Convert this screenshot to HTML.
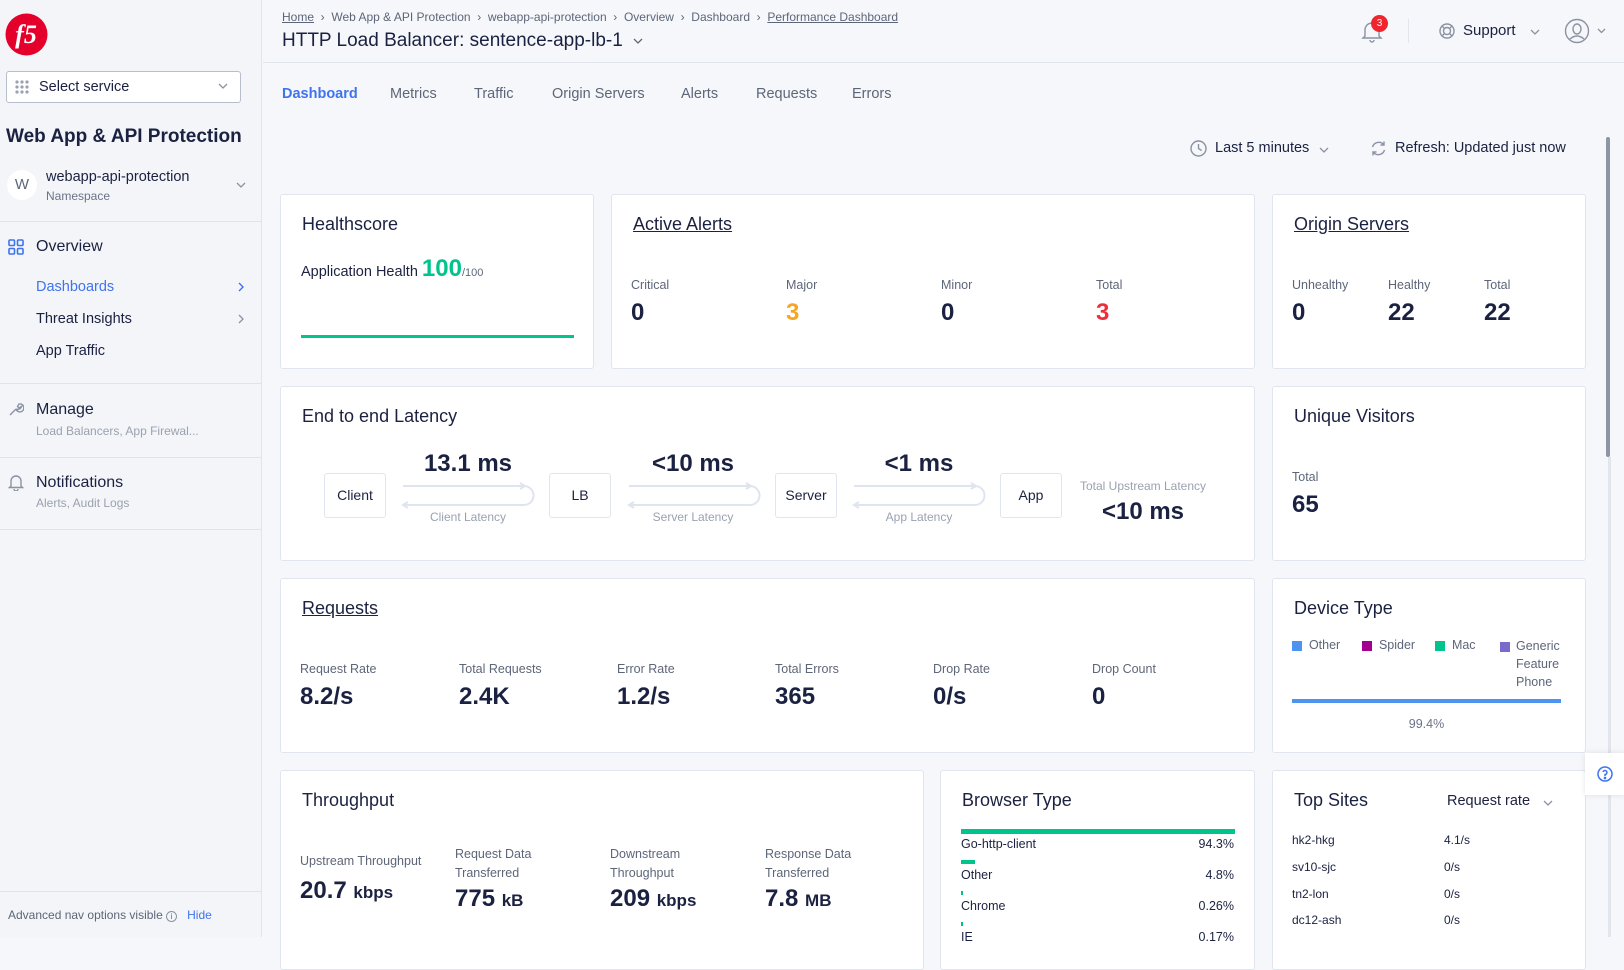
<!DOCTYPE html>
<html><head><meta charset="utf-8"><style>
*{box-sizing:border-box;margin:0;padding:0}
body{width:1624px;height:937px;overflow:hidden;background:#f5f7fa;font-family:"Liberation Sans",sans-serif;color:#1b2141;position:relative}
.a{position:absolute;white-space:nowrap}
.side{position:absolute;left:0;top:0;width:262px;height:937px;background:#f3f5f8;border-right:1px solid #e1e5ec}
.hr{position:absolute;left:0;width:262px;height:1px;background:#dfe3ea}
.card{position:absolute;background:#fff;border:1px solid #e1e5ee;border-radius:3px}
.ct{position:absolute;left:21px;top:19px;font-size:18px;color:#1b2141}
.u{text-decoration:underline}
.lb{font-size:12.5px;color:#5d6679}
.v{font-size:24px;font-weight:bold;color:#1b2141}
.tab{position:absolute;top:86px;font-size:14.5px;color:#5d6679}
.box{position:absolute;top:473px;height:45px;border:1px solid #e1e5ee;border-radius:3px;font-size:14px;text-align:center;line-height:43px;background:#fff}
.lat{position:absolute;top:450px;font-size:24px;font-weight:bold;text-align:center;width:140px}
.ll{position:absolute;top:510px;font-size:12px;color:#9aa1b0;text-align:center;width:140px}
.sq{display:inline-block;width:10px;height:10px;vertical-align:middle}
.chev{position:absolute}
</style></head><body>
<div class="side">
 <svg class="a" style="left:5px;top:13px" width="43" height="43" viewBox="0 0 43 43"><circle cx="21.5" cy="21.5" r="21" fill="#e4002b"/><text x="21" y="30" font-family="Liberation Serif" font-style="italic" font-weight="bold" font-size="26" fill="#fff" text-anchor="middle">f5</text></svg>
 <div class="a" style="left:6px;top:71px;width:235px;height:32px;border:1px solid #b8bfcc;border-radius:3px;background:#fff"></div>
 <svg class="a" style="left:15px;top:80px" width="15" height="15"><g fill="#9aa1b0"><circle cx="2" cy="2" r="1.6"/><circle cx="7" cy="2" r="1.6"/><circle cx="12" cy="2" r="1.6"/><circle cx="2" cy="7" r="1.6"/><circle cx="7" cy="7" r="1.6"/><circle cx="12" cy="7" r="1.6"/><circle cx="2" cy="12" r="1.6"/><circle cx="7" cy="12" r="1.6"/><circle cx="12" cy="12" r="1.6"/></g></svg>
 <div class="a" style="left:39px;top:79px;font-size:14.5px">Select service</div>
 <svg class="chev" style="left:218px;top:83px" width="10" height="6" fill="none" stroke="#8a92a3" stroke-width="1.3"><path d="M1 1 L5 5 L9 1"/></svg>
 <div class="a" style="left:7px;top:170px;width:30px;height:30px;border-radius:50%;background:#fff;text-align:center;line-height:30px;font-size:15px;color:#5d6679">W</div>
 <div class="a" style="left:6px;top:126px;font-size:19px;font-weight:bold">Web App &amp; API Protection</div>
 <div class="a" style="left:46px;top:169px;font-size:14.5px">webapp-api-protection</div>
 <div class="a" style="left:46px;top:189px;font-size:12px;color:#6b7386">Namespace</div>
 <svg class="chev" style="left:236px;top:182px" width="10" height="6" fill="none" stroke="#8a92a3" stroke-width="1.3"><path d="M1 1 L5 5 L9 1"/></svg>
 <div class="hr" style="top:221px"></div>
 <svg class="a" style="left:8px;top:239px" width="16" height="16" fill="none" stroke="#3f73ef" stroke-width="1.6"><rect x="1" y="1" width="5.5" height="5.5" rx="1"/><rect x="9.5" y="1" width="5.5" height="5.5" rx="1"/><rect x="1" y="9.5" width="5.5" height="5.5" rx="1"/><rect x="9.5" y="9.5" width="5.5" height="5.5" rx="1"/></svg>
 <div class="a" style="left:36px;top:238px;font-size:16px;font-weight:500">Overview</div>
 <div class="a" style="left:36px;top:279px;font-size:14.5px;color:#3f73ef">Dashboards</div>
 <svg class="chev" style="left:238px;top:282px" width="6" height="10" fill="none" stroke="#3f73ef" stroke-width="1.4"><path d="M1 1 L5 5 L1 9"/></svg>
 <div class="a" style="left:36px;top:311px;font-size:14.5px">Threat Insights</div>
 <svg class="chev" style="left:238px;top:314px" width="6" height="10" fill="none" stroke="#8a92a3" stroke-width="1.3"><path d="M1 1 L5 5 L1 9"/></svg>
 <div class="a" style="left:36px;top:343px;font-size:14.5px">App Traffic</div>
 <div class="hr" style="top:383px"></div>
 <svg class="a" style="left:8px;top:401px" width="16" height="16" fill="none" stroke="#8a92a3" stroke-width="1.4"><path d="M2 14 L8 8 M8 8 A4 4 0 1 0 11 3 L9.5 5.5 L11 7 L13.5 5.5 A4 4 0 0 1 8 8"/></svg>
 <div class="a" style="left:36px;top:401px;font-size:16px">Manage</div>
 <div class="a" style="left:36px;top:424px;font-size:12px;color:#9aa1b0">Load Balancers, App Firewal...</div>
 <div class="hr" style="top:457px"></div>
 <svg class="a" style="left:8px;top:474px" width="16" height="17" fill="none" stroke="#8a92a3" stroke-width="1.4"><path d="M3 12 V7 A5 5 0 0 1 13 7 V12 L14.5 13.5 H1.5 Z M6 15 A2 2 0 0 0 10 15"/></svg>
 <div class="a" style="left:36px;top:474px;font-size:16px">Notifications</div>
 <div class="a" style="left:36px;top:496px;font-size:12px;color:#9aa1b0">Alerts, Audit Logs</div>
 <div class="hr" style="top:529px"></div>
 <div class="hr" style="top:891px"></div>
 <div class="a" style="left:8px;top:908px;font-size:12px;color:#5d6679">Advanced nav options visible <span style="display:inline-block;width:11px;height:11px;border:1px solid #8a92a3;border-radius:50%;font-size:8px;text-align:center;line-height:9px">i</span> &nbsp; <span style="color:#3f73ef">Hide</span></div>
</div>

<div class="a" style="left:282px;top:10px;font-size:12px;color:#5d6679"><span class="u">Home</span> &nbsp;&#8250;&nbsp; Web App &amp; API Protection &nbsp;&#8250;&nbsp; webapp-api-protection &nbsp;&#8250;&nbsp; Overview &nbsp;&#8250;&nbsp; Dashboard &nbsp;&#8250;&nbsp; <span class="u">Performance Dashboard</span></div>
<div class="a" style="left:282px;top:30px;font-size:19px">HTTP Load Balancer: sentence-app-lb-1</div>
<svg class="chev" style="left:633px;top:38px" width="10" height="6" fill="none" stroke="#5d6679" stroke-width="1.3"><path d="M1 1 L5 5 L9 1"/></svg>
<div class="a" style="left:263px;top:62px;width:1361px;height:1px;background:#e1e5ec"></div>
<svg class="a" style="left:1360px;top:19px" width="24" height="24" fill="none" stroke="#8a92a3" stroke-width="1.4"><path d="M5 17 V11 A7 7 0 0 1 19 11 V17 L21 19 H3 Z M10 21 A2 2 0 0 0 14 21"/></svg>
<div class="a" style="left:1371px;top:15px;width:17px;height:17px;border-radius:50%;background:#f0262e;color:#fff;font-size:10px;text-align:center;line-height:17px">3</div>
<div class="a" style="left:1408px;top:19px;width:1px;height:24px;background:#e1e5ec"></div>
<svg class="a" style="left:1439px;top:23px" width="16" height="16" fill="none" stroke="#8a92a3" stroke-width="1.4"><circle cx="8" cy="8" r="7"/><circle cx="8" cy="8" r="3.5"/><path d="M3 3 L5.5 5.5 M13 3 L10.5 5.5 M3 13 L5.5 10.5 M13 13 L10.5 10.5"/></svg>
<div class="a" style="left:1463px;top:22px;font-size:15px">Support</div>
<svg class="chev" style="left:1530px;top:29px" width="10" height="6" fill="none" stroke="#8a92a3" stroke-width="1.3"><path d="M1 1 L5 5 L9 1"/></svg>
<svg class="a" style="left:1564px;top:18px" width="26" height="26" fill="none" stroke="#8a92a3" stroke-width="1.4"><circle cx="13" cy="13" r="11.5"/><ellipse cx="13" cy="11" rx="4" ry="5"/><path d="M6 21 Q13 15 20 21"/></svg>
<svg class="chev" style="left:1597px;top:28px" width="9" height="6" fill="none" stroke="#8a92a3" stroke-width="1.3"><path d="M1 1 L4.5 4.5 L8 1"/></svg>

<div class="tab" style="left:282px;color:#3f73ef;font-weight:bold">Dashboard</div>
<div class="tab" style="left:390px">Metrics</div>
<div class="tab" style="left:474px">Traffic</div>
<div class="tab" style="left:552px">Origin Servers</div>
<div class="tab" style="left:681px">Alerts</div>
<div class="tab" style="left:756px">Requests</div>
<div class="tab" style="left:852px">Errors</div>

<svg class="a" style="left:1190px;top:140px" width="17" height="17" fill="none" stroke="#8a92a3" stroke-width="1.4"><circle cx="8.5" cy="8.5" r="7.5"/><path d="M8.5 4 V8.5 L11.5 10.5"/></svg>
<div class="a" style="left:1215px;top:140px;font-size:14.5px">Last 5 minutes</div>
<svg class="chev" style="left:1319px;top:147px" width="10" height="6" fill="none" stroke="#8a92a3" stroke-width="1.3"><path d="M1 1 L5 5 L9 1"/></svg>
<svg class="a" style="left:1370px;top:140px" width="17" height="17" fill="none" stroke="#8a92a3" stroke-width="1.4"><path d="M2.5 7 A6.5 6.5 0 0 1 14 5 M14 1.5 V5 H10.5 M14.5 10 A6.5 6.5 0 0 1 3 12 M3 15.5 V12 H6.5"/></svg>
<div class="a" style="left:1395px;top:140px;font-size:14.5px">Refresh: Updated just now</div>
<div class="a" style="left:1606px;top:137px;width:4px;height:320px;background:#8e96a6;border-radius:2px"></div>
<div class="a" style="left:1608px;top:457px;width:3px;height:480px;background:#e1e5ec"></div>

<div class="card" style="left:280px;top:194px;width:314px;height:175px">
 <div class="ct">Healthscore</div>
 <div class="a" style="left:20px;top:60px;font-size:14.5px">Application Health <span style="font-size:24px;font-weight:bold;color:#00c48c">100</span><span style="font-size:11px;color:#5d6679">/100</span></div>
 <div class="a" style="left:20px;top:140px;width:273px;height:3px;background:#00c48c"></div>
</div>
<div class="card" style="left:611px;top:194px;width:644px;height:175px">
 <div class="ct u">Active Alerts</div>
 <div class="a lb" style="left:19px;top:83px">Critical</div><div class="a v" style="left:19px;top:104px">0</div>
 <div class="a lb" style="left:174px;top:83px">Major</div><div class="a v" style="left:174px;top:104px;color:#f5a623">3</div>
 <div class="a lb" style="left:329px;top:83px">Minor</div><div class="a v" style="left:329px;top:104px">0</div>
 <div class="a lb" style="left:484px;top:83px">Total</div><div class="a v" style="left:484px;top:104px;color:#ee2e3a">3</div>
</div>
<div class="card" style="left:1272px;top:194px;width:314px;height:175px">
 <div class="ct u">Origin Servers</div>
 <div class="a lb" style="left:19px;top:83px">Unhealthy</div><div class="a v" style="left:19px;top:104px">0</div>
 <div class="a lb" style="left:115px;top:83px">Healthy</div><div class="a v" style="left:115px;top:104px">22</div>
 <div class="a lb" style="left:211px;top:83px">Total</div><div class="a v" style="left:211px;top:104px">22</div>
</div>

<div class="card" style="left:280px;top:386px;width:975px;height:175px">
 <div class="ct">End to end Latency</div>
</div>
<div class="box" style="left:324px;width:62px">Client</div>
<div class="box" style="left:549px;width:62px">LB</div>
<div class="box" style="left:775px;width:62px">Server</div>
<div class="box" style="left:1000px;width:62px">App</div>
<div class="lat" style="left:398px">13.1 ms</div>
<div class="lat" style="left:623px">&lt;10 ms</div>
<div class="lat" style="left:849px">&lt;1 ms</div>
<div class="ll" style="left:398px">Client Latency</div>
<div class="ll" style="left:623px">Server Latency</div>
<div class="ll" style="left:849px">App Latency</div>
<svg class="a" style="left:400px;top:480px" width="138" height="30" fill="none" stroke="#dfe4ef" stroke-width="2"><path d="M3 6 H124 M120 3 L125 6 L120 9 M3 25 H124 A9.5 9.5 0 0 0 124 6 M8 22 L3 25 L8 28"/></svg>
<svg class="a" style="left:626px;top:480px" width="138" height="30" fill="none" stroke="#dfe4ef" stroke-width="2"><path d="M3 6 H124 M120 3 L125 6 L120 9 M3 25 H124 A9.5 9.5 0 0 0 124 6 M8 22 L3 25 L8 28"/></svg>
<svg class="a" style="left:851px;top:480px" width="138" height="30" fill="none" stroke="#dfe4ef" stroke-width="2"><path d="M3 6 H124 M120 3 L125 6 L120 9 M3 25 H124 A9.5 9.5 0 0 0 124 6 M8 22 L3 25 L8 28"/></svg>
<div class="a" style="left:1073px;top:479px;width:140px;text-align:center;font-size:12px;color:#9aa1b0">Total Upstream Latency</div>
<div class="a" style="left:1073px;top:498px;width:140px;text-align:center;font-size:24px;font-weight:bold">&lt;10 ms</div>
<div class="card" style="left:1272px;top:386px;width:314px;height:175px">
 <div class="ct">Unique Visitors</div>
 <div class="a lb" style="left:19px;top:83px">Total</div><div class="a v" style="left:19px;top:104px">65</div>
</div>

<div class="card" style="left:280px;top:578px;width:975px;height:175px">
 <div class="ct u">Requests</div>
 <div class="a lb" style="left:19px;top:83px">Request Rate</div><div class="a v" style="left:19px;top:104px">8.2/s</div>
 <div class="a lb" style="left:178px;top:83px">Total Requests</div><div class="a v" style="left:178px;top:104px">2.4K</div>
 <div class="a lb" style="left:336px;top:83px">Error Rate</div><div class="a v" style="left:336px;top:104px">1.2/s</div>
 <div class="a lb" style="left:494px;top:83px">Total Errors</div><div class="a v" style="left:494px;top:104px">365</div>
 <div class="a lb" style="left:652px;top:83px">Drop Rate</div><div class="a v" style="left:652px;top:104px">0/s</div>
 <div class="a lb" style="left:811px;top:83px">Drop Count</div><div class="a v" style="left:811px;top:104px">0</div>
</div>
<div class="card" style="left:1272px;top:578px;width:314px;height:175px">
 <div class="ct">Device Type</div>
 <div class="a lb" style="left:19px;top:59px"><span class="sq" style="background:#4c94f0"></span>&nbsp; Other</div>
 <div class="a lb" style="left:89px;top:59px"><span class="sq" style="background:#a3008f"></span>&nbsp; Spider</div>
 <div class="a lb" style="left:162px;top:59px"><span class="sq" style="background:#00c48c"></span>&nbsp; Mac</div>
 <div class="a" style="left:227px;top:59px"><span class="sq" style="background:#7a6acb"></span></div>
 <div class="a lb" style="left:243px;top:58px;line-height:18px;white-space:normal;width:60px">Generic Feature Phone</div>
 <div class="a" style="left:19px;top:120px;width:269px;height:4px;background:#4c94f0"></div>
 <div class="a lb" style="left:19px;top:138px;width:269px;text-align:center;color:#6b7386">99.4%</div>
</div>

<div class="card" style="left:280px;top:770px;width:644px;height:200px">
 <div class="ct">Throughput</div>
 <div class="a lb" style="left:19px;top:83px">Upstream Throughput</div>
 <div class="a v" style="left:19px;top:106px">20.7 <span style="font-size:17px">kbps</span></div>
 <div class="a lb" style="left:174px;top:74px;line-height:19px">Request Data<br>Transferred</div>
 <div class="a v" style="left:174px;top:114px">775 <span style="font-size:17px">kB</span></div>
 <div class="a lb" style="left:329px;top:74px;line-height:19px">Downstream<br>Throughput</div>
 <div class="a v" style="left:329px;top:114px">209 <span style="font-size:17px">kbps</span></div>
 <div class="a lb" style="left:484px;top:74px;line-height:19px">Response Data<br>Transferred</div>
 <div class="a v" style="left:484px;top:114px">7.8 <span style="font-size:17px">MB</span></div>
</div>
<div class="card" style="left:940px;top:770px;width:315px;height:200px">
 <div class="ct">Browser Type</div>
 <div class="a" style="left:20px;top:58px;width:274px;height:5px;background:#00c48c"></div>
 <div class="a" style="left:20px;top:66px;font-size:12.5px">Go-http-client</div><div class="a" style="right:20px;top:66px;font-size:12.5px">94.3%</div>
 <div class="a" style="left:20px;top:89px;width:14px;height:4px;background:#00c48c"></div>
 <div class="a" style="left:20px;top:97px;font-size:12.5px">Other</div><div class="a" style="right:20px;top:97px;font-size:12.5px">4.8%</div>
 <div class="a" style="left:20px;top:120px;width:2px;height:4px;background:#00c48c"></div>
 <div class="a" style="left:20px;top:128px;font-size:12.5px">Chrome</div><div class="a" style="right:20px;top:128px;font-size:12.5px">0.26%</div>
 <div class="a" style="left:20px;top:151px;width:2px;height:4px;background:#00c48c"></div>
 <div class="a" style="left:20px;top:159px;font-size:12.5px">IE</div><div class="a" style="right:20px;top:159px;font-size:12.5px">0.17%</div>
</div>
<div class="card" style="left:1272px;top:770px;width:314px;height:200px">
 <div class="ct">Top Sites</div>
 <div class="a" style="left:174px;top:22px;font-size:14.5px">Request rate</div>
 <svg class="chev" style="left:270px;top:29px" width="10" height="6" fill="none" stroke="#8a92a3" stroke-width="1.3"><path d="M1 1 L5 5 L9 1"/></svg>
 <div class="a" style="left:19px;top:62px;font-size:12px">hk2-hkg</div><div class="a" style="left:171px;top:62px;font-size:12px">4.1/s</div>
 <div class="a" style="left:19px;top:89px;font-size:12px">sv10-sjc</div><div class="a" style="left:171px;top:89px;font-size:12px">0/s</div>
 <div class="a" style="left:19px;top:116px;font-size:12px">tn2-lon</div><div class="a" style="left:171px;top:116px;font-size:12px">0/s</div>
 <div class="a" style="left:19px;top:142px;font-size:12px">dc12-ash</div><div class="a" style="left:171px;top:142px;font-size:12px">0/s</div>
</div>
<div class="a" style="left:1585px;top:753px;width:40px;height:42px;background:#fff;box-shadow:0 0 6px rgba(0,0,0,.1)"></div>
<svg class="a" style="left:1597px;top:766px" width="16" height="16" fill="none" stroke="#3f73ef" stroke-width="1.5"><circle cx="8" cy="8" r="7"/><path d="M6 6 A2 2 0 1 1 8 8.5 V10"/><circle cx="8" cy="12" r=".6" fill="#3f73ef"/></svg>
</body></html>
